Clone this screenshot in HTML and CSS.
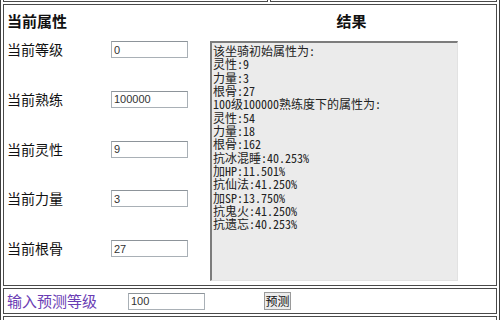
FILE: index.html
```html
<!DOCTYPE html>
<html lang="zh">
<head>
  <meta charset="UTF-8">
  <title>坐骑属性计算</title>
  <link rel="stylesheet" href="styles.css">
</head>
<body>
  <div class="frame">
    <div class="row top">
      <div class="cell top-left"></div>
      <div class="cell top-right"></div>
    </div>

    <div class="cell main">
      <div class="attrs">
        <h3 class="title">当前属性</h3>
        <div class="fields">
          <label>当前等级</label><input type="text" value="0">
          <label>当前熟练</label><input type="text" value="100000">
          <label>当前灵性</label><input type="text" value="9">
          <label>当前力量</label><input type="text" value="3">
          <label>当前根骨</label><input type="text" value="27">
        </div>
      </div>
      <div class="result">
        <h3 class="title center">结果</h3>
        <div class="result-box">该坐骑初始属性为:
灵性:9
力量:3
根骨:27
100级100000熟练度下的属性为:
灵性:54
力量:18
根骨:162
抗冰混睡:40.253%
加HP:11.501%
抗仙法:41.250%
加SP:13.750%
抗鬼火:41.250%
抗遗忘:40.253%</div>
      </div>
    </div>

    <div class="cell predict">
      <label class="predict-label">输入预测等级</label>
      <input type="text" value="100">
      <button type="button">预测</button>
    </div>

    <div class="cell bottom"></div>
  </div>
</body>
</html>
```

FILE: styles.css
```css
body { margin: 0; font-family: "Noto Sans CJK SC", "Liberation Sans", sans-serif; color: #111; background: #fff; }

.frame {
  width: 500px;
  box-sizing: border-box;
  margin-top: -23px;
  border: 1px solid #3f3f3f;
  padding: 2px;
  display: flex;
  flex-direction: column;
  gap: 2px;
}

.cell { border: 1px solid #4a4a4a; box-sizing: border-box; }

.row.top { display: flex; gap: 2px; }
.top-left { width: 265px; height: 22px; }
.top-right { flex: 1; height: 22px; }

.main { display: flex; height: 282px; }

.title { margin: 0; font-size: 15px; font-weight: bold; line-height: 32px; height: 36px; }
.center { text-align: center; }

.attrs { width: 203px; padding-left: 3px; box-sizing: border-box; }
.fields {
  display: grid;
  grid-template-columns: 104px 77px;
  row-gap: 32.75px;
  align-items: center;
}
.fields label { font-size: 14px; line-height: 17px; }

input {
  width: 77px;
  height: 17px;
  box-sizing: border-box;
  border: 1px solid #a9b0b6;
  border-top-color: #8d949a;
  padding: 0 2px;
  font: 11px "Liberation Sans", sans-serif;
  color: #333;
  outline: none;
}

.result { flex: 1; }
.result-box {
  margin-left: 3px;
  width: 248px;
  height: 240px;
  box-sizing: border-box;
  border-top: 2px solid #7c7c7c;
  border-left: 2px solid #7c7c7c;
  border-right: 1px solid #e2e2e2;
  border-bottom: 1px solid #e2e2e2;
  background: #ebebeb;
  padding: 1px 0 0 1px;
  white-space: pre;
  font: 12px/13.33px "Noto Sans Mono CJK SC", "Liberation Mono", "Noto Sans CJK SC", monospace;
  color: #222;
}

.predict { display: flex; align-items: center; height: 26px; }
.predict-label { width: 121px; padding-left: 3px; font-size: 15px; color: #6a3db4; line-height: 20px; }
.predict button {
  margin-left: 59px;
  width: 27px;
  height: 18px;
  padding: 0;
  border: 1px solid #9a9a9a;
  background: #ececec;
  font: 12px "Noto Sans CJK SC", sans-serif;
  line-height: 14px;
  color: #111;
}

.bottom { height: 20px; }
```
